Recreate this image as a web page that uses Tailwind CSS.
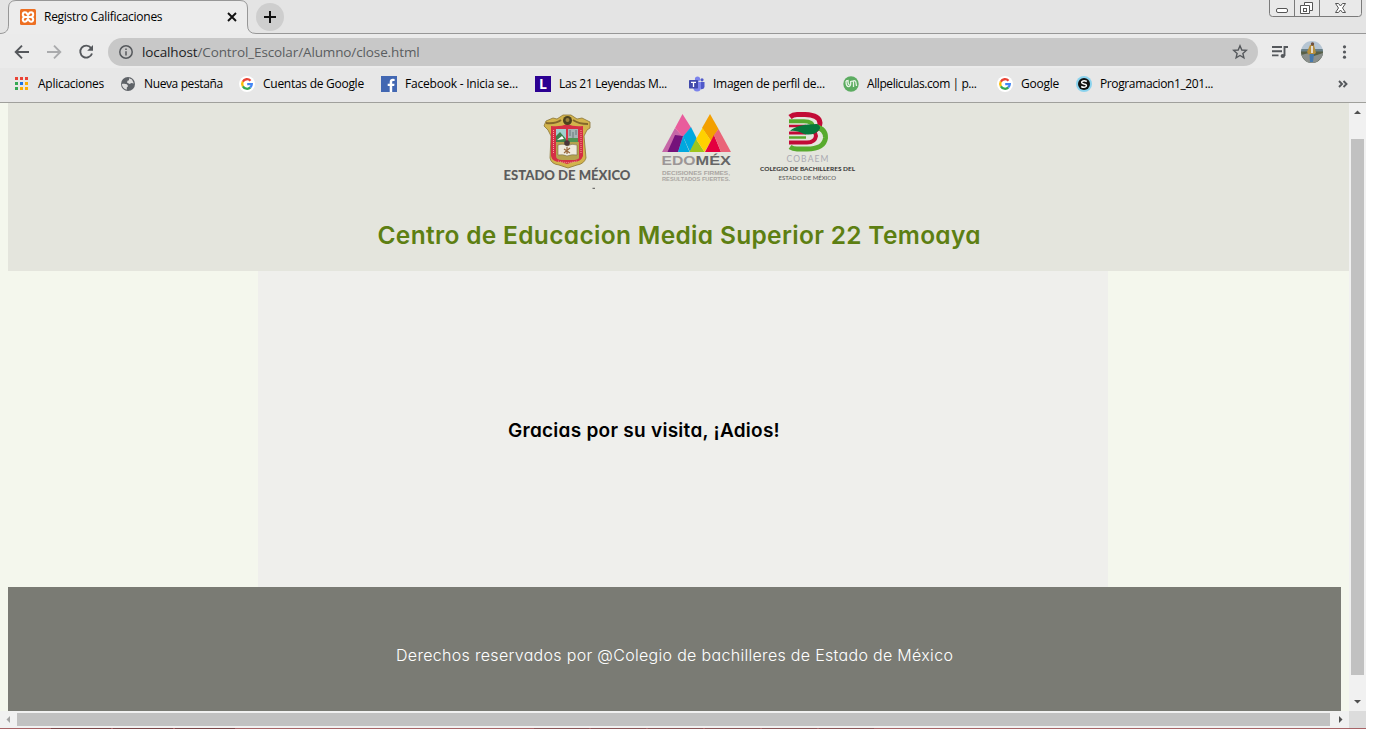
<!DOCTYPE html>
<html lang="es">
<head>
<meta charset="utf-8">
<title>Registro Calificaciones</title>
<script src="https://cdn.jsdelivr.net/npm/@tailwindcss/browser@4"></script>
</head>
<body class="bg-white overflow-hidden">
<svg class="hidden">
  <symbol id="google" viewBox="0 0 16 16">
    <circle cx="8" cy="8" r="8" fill="#fff"/>
    <g fill="none" stroke-width="2.3">
      <path d="M3.8 5.7A4.8 4.8 0 0 1 11.5 4.7" stroke="#ea4335"/>
      <path d="M3.9 10.4A4.8 4.8 0 0 1 3.8 5.6" stroke="#fbbc05"/>
      <path d="M11.4 11.4A4.8 4.8 0 0 1 3.9 10.4" stroke="#34a853"/>
      <path d="M8.2 8.1H12.8A4.8 4.8 0 0 1 11.3 11.5" stroke="#4285f4"/>
    </g>
  </symbol>
</svg>
<div class="w-[1366px] h-[729px] flex flex-col font-['Open_Sans','Noto_Sans',sans-serif] text-[12px] text-black">
  <div class="relative h-[34px] shrink-0 flex bg-[#e4e4e4]">
    <svg class="absolute inset-0" width="1366" height="34"><path d="M0 33.500C6 33.500 8.500 30 8.500 25V8Q8.500 .5 16 .5H240Q247.500 .5 247.500 8V25Q247.500 33.500 256 33.500H1366V35H0Z" fill="#ececec" stroke="#979797"/></svg>
    <div class="relative w-[248px] pl-5 pr-[10px] flex items-center">
      <svg class="shrink-0" width="16" height="16" viewBox="0 0 16 16"><rect width="16" height="16" rx="1.500" fill="#ed6f22"/><path d="M5.300 8H10.700M5.300 8C1.800 7.500 2.200 3.400 5 3.300C7.600 3.300 7 5.700 8 6.100C9 5.700 8.400 3.300 11 3.300C13.800 3.400 14.200 7.500 10.700 8C14.200 8.500 13.800 12.600 11 12.700C8.400 12.700 9 10.300 8 9.900C7 10.300 7.600 12.700 5 12.700C2.200 12.600 1.800 8.500 5.300 8Z" fill="none" stroke="#fff" stroke-width="2"/></svg>
      <span class="ml-2 whitespace-nowrap tracking-[-0.27px]">Registro Calificaciones</span>
      <svg class="ml-auto" width="12" height="12"><path d="M2 2L10 10M10 2L2 10" stroke="#111" stroke-width="1.900"/></svg>
    </div>
    <svg class="relative ml-2 mt-[3px]" width="28" height="28"><circle cx="14" cy="14" r="14" fill="#cecece"/><path d="M8 14H20M14 8V20" stroke="#111" stroke-width="2"/></svg>
    <svg class="relative ml-auto mr-[3px]" width="94" height="18" fill="none" stroke="#7a7a7a"><path d="M.5 0V13.500Q.5 16.500 3.500 16.500H89.500Q92.500 16.500 92.500 13.500V0M25.500 0V16M50.500 0V16" fill="#e9e9e9"/><rect x="7.500" y="8.500" width="11" height="4" rx="1.500" fill="#fff" stroke="#555"/><path d="M35.500 2.500H43.500V10.500H40.500V13.500H31.500V5.500H35.500Z" fill="#fff" stroke="#555"/><path d="M35.500 5.500H40.500V10.500" stroke="#555"/><rect x="34.500" y="8.500" width="3" height="3" stroke="#555"/><path d="M66.500 3.500H69.500L71.500 6L73.500 3.500H76.500L73.500 8L76.500 12.500H73.500L71.500 10L69.500 12.500H66.500L69.500 8Z" fill="#fff" stroke="#555"/></svg>
  </div>
  <div class="h-[34px] shrink-0 flex items-center bg-[#ebebeb] pt-[2px]">
    <svg width="108" height="28" fill="none" stroke="#55585c" stroke-width="1.900"><path d="M29 14H16M22 7.700L15.700 14L22 20.300"/><path d="M47 14H60M54 7.700L60.300 14L54 20.300" stroke="#aaabad"/><path d="M91 9.900A6 6 0 1 0 92 15.500"/><path d="M93 7V12.800H87.200Z" fill="#55585c" stroke="none"/></svg>
    <div class="w-[1150px] h-7 rounded-full bg-[#c8c8c8] flex items-center pl-[11px] pr-[10px]">
      <svg width="14" height="14" fill="none" stroke="#55585c" stroke-width="1.500"><circle cx="7" cy="7" r="6.200"/><path d="M7 6.300V10.400M7 3.500V5"/></svg>
      <span class="ml-[9px] text-[13.500px] text-[#5a5d60] whitespace-nowrap tracking-[-0.12px]"><span class="text-[#202124]">localhost</span>/Control_Escolar/Alumno/close.html</span>
      <svg class="ml-auto" width="16" height="16" viewBox="0 0 16 16"><path d="M8 1.800L9.800 6L14.300 6.400L10.900 9.400L11.900 13.800L8 11.500L4.100 13.800L5.100 9.400L1.700 6.400L6.200 6Z" fill="none" stroke="#55585c" stroke-width="1.400"/></svg>
    </div>
    <svg class="ml-[13px]" width="18" height="16" fill="none" stroke="#55585c" stroke-width="1.900"><path d="M1 3H11M1 7.200H11M1 11.400H7.500M13.500 12V3H17"/><ellipse cx="11.800" cy="12" rx="2.200" ry="2" fill="#55585c" stroke="none"/></svg>
    <svg class="ml-[12px]" width="22" height="22" viewBox="0 0 22 22"><defs><clipPath id="av"><circle cx="11" cy="11" r="11"/></clipPath></defs><g clip-path="url(#av)"><rect width="22" height="22" fill="#b5c5d3"/><rect y="8" width="22" height="3" fill="#687f87"/><rect y="10.500" width="22" height="12" fill="#586047"/><path d="M0 14L8 12L13 15L22 12V16L14 22H6Z" fill="#8a8f8c"/><path d="M9 4L13 4L15 12L12 14H8L6 11Z" fill="#b7903d"/><path d="M10 5H12V12H10Z" fill="#e4ddd0"/><path d="M8.500 13H13L12 21H9Z" fill="#4679ae"/><circle cx="11.500" cy="3" r="1.700" fill="#70513f"/></g></svg>
    <svg class="ml-[19px]" width="5" height="16" fill="#55585c"><circle cx="2.500" cy="2.800" r="1.600"/><circle cx="2.500" cy="8" r="1.600"/><circle cx="2.500" cy="13.200" r="1.600"/></svg>
  </div>
  <div class="h-[35px] shrink-0 border-b border-[#a0a09c] bg-[#e7e7e7] flex items-center pl-[14px] pr-[18px] pb-[2px] whitespace-nowrap">
    <div class="w-[106px] flex items-center gap-2">
      <svg class="mr-[2px]" width="14" height="14"><path d="M1 0h3v3H1zM6 0h3v3H6zM11 0h3v3h-3z" fill="#ea4335"/><path d="M1 5h3v3H1zM1 10h3v3H1z" fill="#34a853"/><path d="M6 5h3v3H6z" fill="#1a73e8"/><path d="M6 10h3v3H6zM11 5h3v3h-3zM11 10h3v3h-3z" fill="#fbad05"/></svg>
      <span class="tracking-[-0.27px]">Aplicaciones</span>
    </div>
    <div class="w-[119px] flex items-center gap-2">
      <svg width="16" height="16"><circle cx="8" cy="8" r="7" fill="#5f6368"/><path d="M1.800 8C5 7.300 8 8 8 10.200L6.800 11.500V13.800C4 13.300 2 11 1.800 8ZM9 2.300L12 3.600L13.800 7.500L11.500 7L9.500 8L7 6.500L7.500 4.800L9 4.300Z" fill="#dedede"/></svg>
      <span class="tracking-[-0.38px]">Nueva pestaña</span>
    </div>
    <div class="w-[142px] flex items-center gap-2"><svg width="16" height="16"><use href="#google"/></svg><span class="tracking-[-0.27px]">Cuentas de Google</span></div>
    <div class="w-[154px] flex items-center gap-2"><svg width="16" height="16"><rect width="16" height="16" fill="#4267b2"/><path d="M8.700 16V10H6.700V7.700H8.700V6C8.700 3.900 9.900 2.800 11.900 2.800L13.600 2.900V5H12.400C11.400 5 11.200 5.400 11.200 6.200V7.700H13.500L13.200 10H11.200V16Z" fill="#fff"/></svg><span class="tracking-[-0.21px]">Facebook - Inicia se...</span></div>
    <div class="w-[154px] flex items-center gap-2"><span class="w-4 h-4 bg-[#2b0092] text-white font-bold text-[14px] leading-4 text-center">L</span><span class="tracking-[-0.35px]">Las 21 Leyendas M...</span></div>
    <div class="w-[154px] flex items-center gap-2"><svg width="16" height="16"><circle cx="8.500" cy="3" r="2.600" fill="#7b83eb"/><circle cx="13" cy="3.800" r="1.600" fill="#5059c9"/><path d="M10 6H15.500V11Q15 13.500 12 13.300Z" fill="#5059c9"/><path d="M4 6H12V11Q12 15.500 8 15.500Q4.500 15.500 4 11Z" fill="#7b83eb"/><rect y="4" width="9" height="8.500" rx=".7" fill="#4049ac"/><path d="M2 6.300H7M4.500 6.300V11" stroke="#fff" stroke-width="1.300"/></svg><span class="tracking-[-0.27px]">Imagen de perfil de...</span></div>
    <div class="w-[154px] flex items-center gap-2"><svg width="16" height="16" fill="none"><circle cx="8" cy="8" r="7.700" fill="#5cac61"/><path d="M3 5Q3 11 6 10.500Q8 10 7.700 5.500Q11 4 10.500 8V11M10 5Q13 4 13 7L13.500 10M3 5L5 4.500Q5 9 6.500 8.500" stroke="#e6f3e5" stroke-width="1.300"/></svg><span class="tracking-[-0.42px]">Allpeliculas.com | p...</span></div>
    <div class="w-[79px] flex items-center gap-2"><svg width="16" height="16"><use href="#google"/></svg><span class="tracking-[-0.22px]">Google</span></div>
    <div class="flex items-center gap-2"><svg width="16" height="16" fill="none"><circle cx="8" cy="8" r="8" fill="#8bd3ee"/><circle cx="8" cy="8" r="6" fill="#111"/><path d="M10.800 5.500Q8 3.800 5.900 5.500Q5 7.500 8 8Q11.500 8.500 10 10.500Q8 12 5.200 10.500" stroke="#fff" stroke-width="1.500"/></svg><span class="tracking-[-0.38px]">Programacion1_201...</span></div>
    <svg class="ml-auto" width="10" height="8" fill="none" stroke="#55585c" stroke-width="1.900"><path d="M1 1L4 4L1 7M5.500 1L8.500 4L5.500 7"/></svg>
  </div>
  <div class="h-[608px] shrink-0 flex">
    <div class="w-[1349px] bg-[#f4f7ed] pl-2 font-['Inter','Lato',sans-serif] [font-feature-settings:'cv11'_1]">
      <header class="h-[168px] bg-[#e4e5dd]">
        <div class="h-[97px] pl-[490px] pt-[7px] flex font-['Liberation_Sans',sans-serif]">
          <svg width="140" height="85" viewBox="498 110 140 85">
            <path d="M546 121L553 118L557 119L563 115H571L577 119L582 118L590 122V128L587 130L584 136L586 158Q584 164 577 165L568 168L559 165Q551 164 550 158L551 136L548 130L544 126Z" fill="#d2b44c" stroke="#8a7535" stroke-width=".8"/>
            <path d="M551 126Q561 127 567 124Q574 127 583 126V156Q581 162 573 162L567 164L561 162Q552 162 551 156Z" fill="#d52f45"/>
            <path d="M546 123Q556 124 561 120M573 120Q579 124 588 124" fill="none" stroke="#83672a" stroke-width="2"/>
            <circle cx="567.500" cy="120.500" r="4.500" fill="#4b411e"/><circle cx="567.500" cy="120" r="2" fill="#9b803b"/>
            <path d="M556 129H566V142H556Z" fill="#9fd0d0"/><path d="M556 136L560 132L566 139V142H556Z" fill="#40814b"/><path d="M557 140L562 136L564 139Z" fill="#fff"/>
            <path d="M568 129H578V140H568Z" fill="#a5b3b4"/><path d="M568 138H578V143H568Z" fill="#529353"/><path d="M570 130V136M573 132V138M576 130V135" stroke="#66797b"/>
            <path d="M556 142H579V158Q578 160 572 160H562Q556 160 556 156Z" fill="#b5a34e"/>
            <path d="M558 145Q564 143 567 146Q572 143 577 145V155Q572 154 567 156Q563 154 558 155Z" fill="#eeeadd" stroke="#776d4d" stroke-width=".6"/>
            <circle cx="567" cy="143" r="2.800" fill="#49363a"/><path d="M564 149L570 153M570 148L564 153M567 147V154" stroke="#996a3e" stroke-width="1.200"/>
            <path d="M553.500 130V154M581 130V154M558 161Q567 164 577 161" fill="none" stroke="#f2a1a0" stroke-width="1" stroke-dasharray="1 1"/>
            <text x="503.500" y="180" font-size="12.500" font-weight="900" fill="#5c5c5c" textLength="127" lengthAdjust="spacingAndGlyphs" font-family="Lato">ESTADO DE MÉXICO</text>
            <path d="M592.500 188.300H595" stroke="#555"/>
          </svg>
          <svg class="ml-[17px]" width="85" height="85" viewBox="655 110 85 85">
            <path d="M662 152L675 128L684 138L678 152Z" fill="#c667a7"/><path d="M682.500 114L691 127.500L683 137L675 128Z" fill="#e95c9c"/><path d="M667.500 152L675 135L683 136L678 152Z" fill="#75127b"/><path d="M691 127L697 139L690 152L683 136.500Z" fill="#00a8df"/><path d="M683 136.500L689.500 152H678Z" fill="#00a8df"/><path d="M696 139L704.500 152H689.500Z" fill="#9ec51c"/><path d="M710 114L718.500 129L711 141L702 128Z" fill="#f3a000"/><path d="M702.500 128L711 141L704.500 152L696 139Z" fill="#ffd100"/><path d="M714 135L721 152H705Z" fill="#e4003f"/><path d="M718.500 129L731 152H721L714 135Z" fill="#ea6478"/>
            <text x="661.500" y="165" font-size="13" font-weight="700" fill="#9c9696" textLength="34" lengthAdjust="spacingAndGlyphs">EDO</text><text x="695.500" y="165" font-size="13" font-weight="700" fill="#666" textLength="35.500" lengthAdjust="spacingAndGlyphs">MÉX</text>
            <text x="662" y="174.500" font-size="5.600" font-weight="700" fill="#aaa5a2" textLength="68" lengthAdjust="spacingAndGlyphs">DECISIONES FIRMES,</text><text x="662" y="180.500" font-size="5.600" font-weight="700" fill="#aaa5a2" textLength="68" lengthAdjust="spacingAndGlyphs">RESULTADOS FUERTES.</text>
          </svg>
          <svg class="ml-[15px]" width="105" height="85" viewBox="755 110 105 85">
            <g fill="none"><path d="M790 117Q793 114.500 797 114.500H805Q819.500 115 820 123Q820 129 812 131.500" stroke="#c20b36" stroke-width="5"/><path d="M789 121.300H804Q813 121.500 813 126.500" stroke="#58aa2d" stroke-width="4"/><path d="M789 126H806" stroke="#c20b36" stroke-width="2.500"/><path d="M797 128.500H806Q816 130 816 136Q815 142.500 807 142.500H789" stroke="#c20b36" stroke-width="4"/><path d="M789 137.500H806" stroke="#58aa2d" stroke-width="2.500"/><path d="M789 133H806" stroke="#c20b36" stroke-width="3"/><path d="M815 126.500Q826 129 825.500 138Q824 149 807 149H797Q793 149 790 147" stroke="#58aa2d" stroke-width="5"/></g>
            <path d="M790 131Q797 124 817 124Q822 127 819 130Q814 136 804 134Q796 130 790 131Z" fill="#08773b"/>
            <text x="786.500" y="162" font-size="8.500" fill="#aaaab2" textLength="42" lengthAdjust="spacing" font-family="Lato">COBAEM</text>
            <text x="760" y="171" font-size="6.300" font-weight="700" fill="#333" textLength="95" lengthAdjust="spacingAndGlyphs" font-family="Lato">COLEGIO DE BACHILLERES DEL</text>
            <text x="778.500" y="180" font-size="6.300" fill="#555" textLength="57.500" lengthAdjust="spacingAndGlyphs" font-family="Lato">ESTADO DE MÉXICO</text>
          </svg>
        </div>
        <h1 class="pl-[369.500px] h-[71px] pt-[17px] text-[24.500px] leading-[36px] font-semibold text-[#5d7f12] whitespace-nowrap tracking-[0.32px]">Centro de Educacion Media Superior 22 Temoaya</h1>
      </header>
      <main class="ml-[250px] w-[850px] h-[316px] bg-[#efefec] pl-[250px] pt-[145px]">
        <h2 class="text-[19px] leading-[30px] font-semibold whitespace-nowrap tracking-[0.27px]">Gracias por su visita, ¡Adios!</h2>
      </main>
      <footer class="w-[1333px] h-[124px] bg-[#7a7b74] pl-[388px] pt-[56px] text-[16px] leading-6 font-light text-white whitespace-nowrap tracking-[0.31px]"><span>Derechos reservados por @Colegio de bachilleres de Estado de México</span></footer>
    </div>
    <div class="w-[17px] bg-[#f1f1f1] flex flex-col items-center">
      <svg width="17" height="36"><path d="M5 11L8.500 7.500L12 11Z" fill="#505050"/></svg>
      <div class="w-[13px] h-[536px] bg-[#c1c1c1]"></div>
      <svg width="17" height="36"><path d="M5 25H12L8.500 28.500Z" fill="#505050"/></svg>
    </div>
  </div>
  <div class="h-[17px] shrink-0 bg-[#f1f1f1] flex items-center">
    <svg width="17" height="17"><path d="M10 5V12L6.500 8.500Z" fill="#a3a3a3"/></svg>
    <div class="w-[1313px] h-[13px] bg-[#c1c1c1]"></div>
    <svg width="19" height="17"><path d="M9 5V12L12.500 8.500Z" fill="#505050"/></svg>
    <div class="w-[17px] h-[17px] bg-[#dcdcdc]"></div>
  </div>
  <div class="h-px shrink-0 bg-[#a76366] flex gap-[2px] pl-[51px]"><div class="w-[60px] bg-[#7b4547]"></div><div class="w-[60px] bg-[#7b4547]"></div><div class="w-[60px] bg-[#7b4547]"></div><div class="ml-[297px] w-[55px] bg-[#8b5557]"></div><div class="w-[55px] bg-[#8b5557]"></div><div class="w-[55px] bg-[#8b5557]"></div><div class="w-[55px] bg-[#8b5557]"></div><div class="w-[55px] bg-[#8b5557]"></div><div class="w-[55px] bg-[#8b5557]"></div></div>
</div>
</body>
</html>
